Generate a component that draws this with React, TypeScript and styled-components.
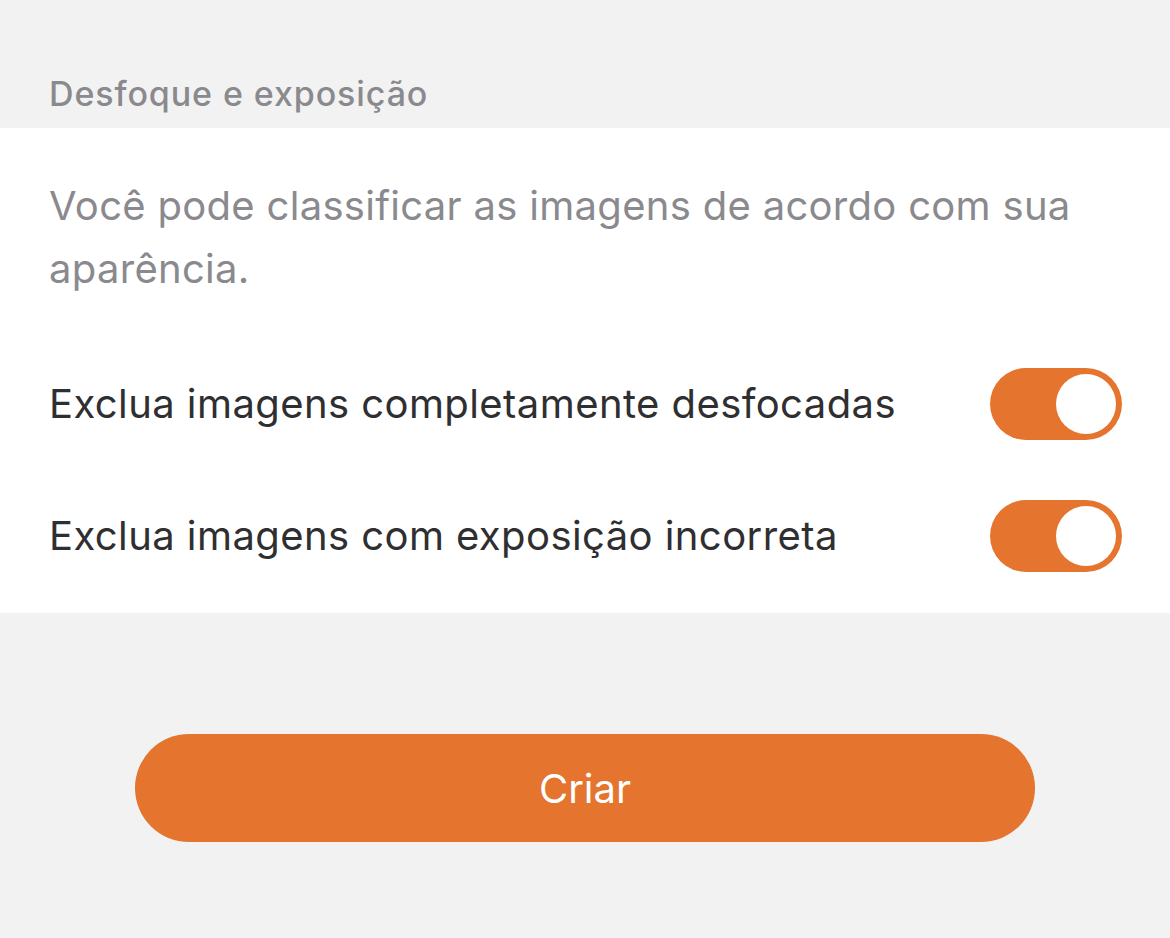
import styled, { createGlobalStyle } from 'styled-components';

const GlobalStyle = createGlobalStyle`
  html, body {
    margin: 0;
    padding: 0;
    background: #f2f2f2;
  }
  body {
    font-family: Inter, "Noto Sans", "Liberation Sans", sans-serif;
    -webkit-font-smoothing: antialiased;
  }
`;

const Page = styled.div`
  width: 1170px;
  height: 938px;
  background: #f2f2f2;
  display: flex;
  flex-direction: column;
`;

const SectionTitle = styled.div`
  height: 128px;
  box-sizing: border-box;
  padding: 0 49px 14px;
  display: flex;
  align-items: flex-end;
  font-size: 34px;
  font-weight: 500;
  color: #8a8a8e;
  letter-spacing: 0.9px;
`;

const Panel = styled.div`
  background: #fff;
  height: 485px;
  box-sizing: border-box;
  padding: 46px 0 0 49px;
`;

const Description = styled.p`
  margin: 0;
  padding-right: 80px;
  font-size: 40px;
  line-height: 63px;
  color: #8a8a8e;
  letter-spacing: 0.3px;
`;

const Rows = styled.div`
  display: flex;
  flex-direction: column;
  padding-top: 38px;
`;

const Row = styled.div`
  height: 132px;
  display: flex;
  align-items: center;
  justify-content: space-between;
  padding-right: 48px;
`;

const RowLabel = styled.span`
  font-size: 40px;
  color: #2f2f31;
  letter-spacing: 0.42px;
  margin-top: -2px;
`;

const Track = styled.div<{ $on: boolean }>`
  width: 132px;
  height: 72px;
  border-radius: 36px;
  background: ${(p) => (p.$on ? '#e5742e' : '#e5e5ea')};
  display: flex;
  align-items: center;
  justify-content: ${(p) => (p.$on ? 'flex-end' : 'flex-start')};
  padding: 0 6px;
  box-sizing: border-box;
`;

const Knob = styled.div`
  width: 60px;
  height: 60px;
  border-radius: 50%;
  background: #fff;
`;

const Footer = styled.div`
  flex: 1;
  display: flex;
  justify-content: center;
  align-items: flex-start;
  padding-top: 121px;
`;

const PrimaryButton = styled.button`
  width: 900px;
  height: 108px;
  border: none;
  border-radius: 54px;
  background: #e5742e;
  color: #fff;
  font-family: inherit;
  font-size: 40px;
  cursor: pointer;
`;

const Toggle = ({ on }: { on: boolean }) => (
  <Track $on={on}>
    <Knob />
  </Track>
);

const options = [
  { label: 'Exclua imagens completamente desfocadas', on: true },
  { label: 'Exclua imagens com exposição incorreta', on: true },
];

export default function App() {
  return (
    <Page>
      <GlobalStyle />
      <SectionTitle>Desfoque e exposição</SectionTitle>
      <Panel>
        <Description>Você pode classificar as imagens de acordo com sua aparência.</Description>
        <Rows>
          {options.map((o) => (
            <Row key={o.label}>
              <RowLabel>{o.label}</RowLabel>
              <Toggle on={o.on} />
            </Row>
          ))}
        </Rows>
      </Panel>
      <Footer>
        <PrimaryButton>Criar</PrimaryButton>
      </Footer>
    </Page>
  );
}
